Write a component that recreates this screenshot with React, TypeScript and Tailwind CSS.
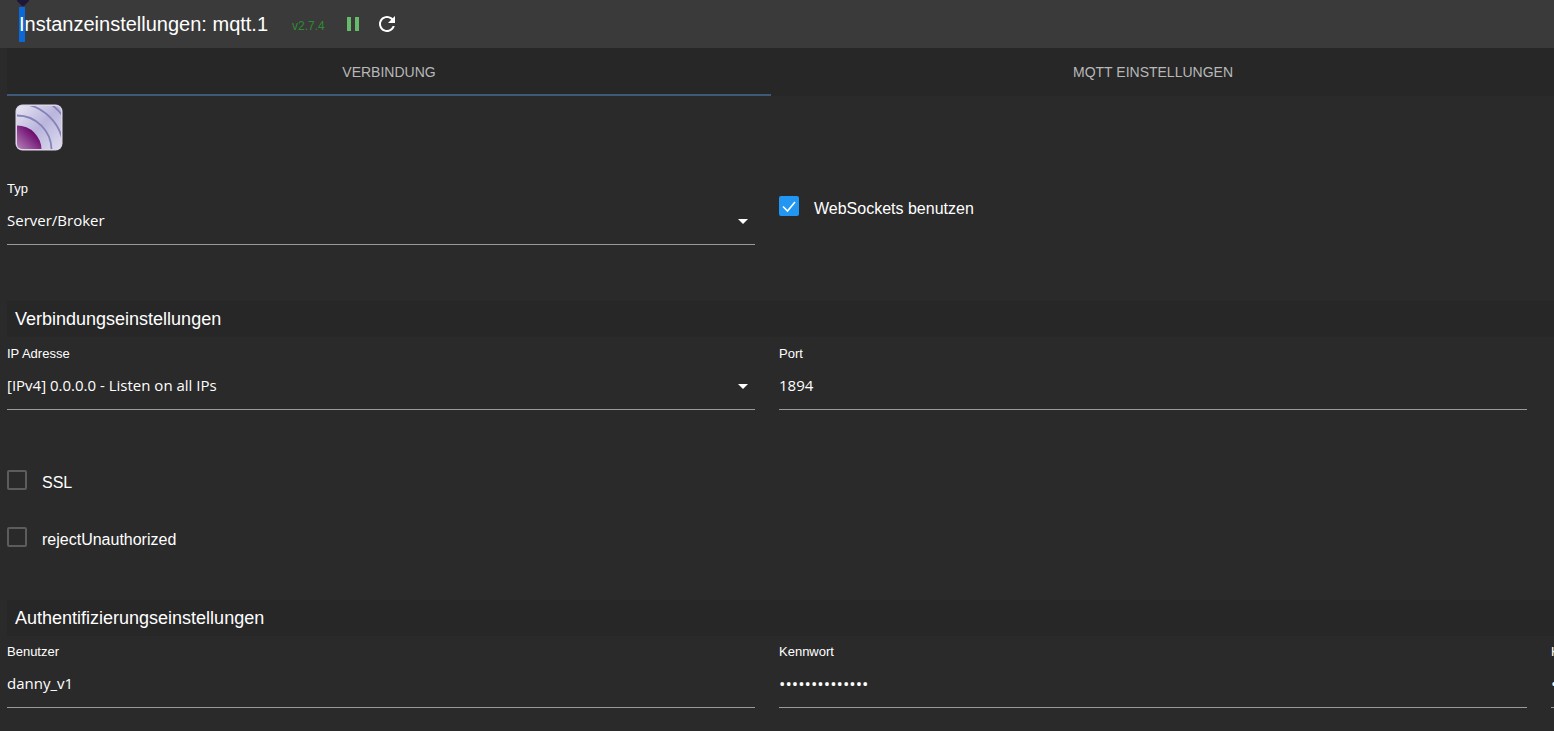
import React from 'react';

const ipOptions = ['[IPv4] 0.0.0.0 - Listen on all IPs', '[IPv4] 127.0.0.1 - Localhost'];
const typeOptions = ['Server/Broker', 'Client/Subscriber'];

const controlClass =
  "block h-[49px] w-full appearance-none rounded-none border-b border-[#9a9a9a] bg-transparent p-0 font-['Open_Sans','Noto_Sans',sans-serif] text-white outline-none";

interface FieldProps {
  id: string;
  label: string;
  children: React.ReactNode;
}

export default function App() {
  return (
    <div className="min-h-screen overflow-hidden bg-[#2a2a2a] font-['Liberation_Sans',Arial,sans-serif] text-white">
      <Header />
      <main className="pl-[7px]">
        <Tabs />
        <div className="px-2 pt-2">
          <AdapterLogo />
        </div>

        <Row className="pt-7">
          <Field id="type" label="Typ">
            <Select id="type" options={typeOptions} />
          </Field>
          <div className="pt-4">
            <Checkbox id="websockets" label="WebSockets benutzen" defaultChecked />
          </div>
        </Row>

        <SectionTitle className="mt-14">Verbindungseinstellungen</SectionTitle>
        <Row className="pt-2">
          <Field id="bind" label="IP Adresse">
            <Select id="bind" options={ipOptions} />
          </Field>
          <Field id="port" label="Port">
            <input id="port" type="text" defaultValue="1894" className={`${controlClass} text-[15px]`} />
          </Field>
        </Row>

        <div className="flex flex-col gap-[37px] pt-[60px]">
          <Checkbox id="ssl" label="SSL" />
          <Checkbox id="rejectUnauthorized" label="rejectUnauthorized" />
        </div>

        <SectionTitle className="mt-[53px]">Authentifizierungseinstellungen</SectionTitle>
        <Row className="pt-[7px]">
          <Field id="user" label="Benutzer">
            <input id="user" type="text" defaultValue="danny_v1" className={`${controlClass} text-[15px]`} />
          </Field>
          <Field id="pass" label="Kennwort">
            <input id="pass" type="password" defaultValue="12345678901234" className={`${controlClass} text-[17px]`} />
          </Field>
          <Field id="passRepeat" label="Kennwort-Wiederholung">
            <input id="passRepeat" type="password" defaultValue="12345678901234" className={`${controlClass} text-[17px]`} />
          </Field>
        </Row>
      </main>
    </div>
  );
}

function Header() {
  return (
    <header className="relative flex h-12 items-center bg-[#3a3a3a] pl-[19px]">
      <svg className="absolute left-[17px] top-0" width="12" height="6" viewBox="0 0 12 6" aria-hidden="true">
        <path d="M0 0h12v1L7 6H5L0 1z" fill="#1f1738" />
      </svg>
      <h1 className="text-xl leading-[35px]">
        <span className="inline-block bg-[#0b68d8]">I</span>nstanzeinstellungen: mqtt.1
      </h1>
      <span className="ml-6 mt-1 text-xs text-[#2e8b32]">v2.7.4</span>
      <button type="button" aria-label="Pause" className="ml-4 text-[#66bb6a]">
        <svg width="24" height="24" viewBox="0 0 24 24" fill="currentColor">
          <path d="M6 19h4V5H6v14zm8-14v14h4V5h-4z" />
        </svg>
      </button>
      <button type="button" aria-label="Neu laden" className="ml-[10px]">
        <svg width="24" height="24" viewBox="0 0 24 24" fill="currentColor">
          <path d="M17.65 6.35C16.2 4.9 14.21 4 12 4c-4.42 0-7.99 3.58-7.99 8s3.57 8 7.99 8c3.73 0 6.84-2.55 7.73-6h-2.08c-.82 2.33-3.04 4-5.65 4-3.31 0-6-2.69-6-6s2.69-6 6-6c1.66 0 3.14.69 4.22 1.78L13 11h7V4l-2.35 2.35z" />
        </svg>
      </button>
    </header>
  );
}

function Tabs() {
  return (
    <nav role="tablist" className="flex h-12 bg-[#272727] pr-[19px] text-sm text-[#b8b8b8]">
      <button type="button" role="tab" aria-selected="true" className="flex-1 border-b-2 border-[#3d5a7a] pt-[2px]">
        VERBINDUNG
      </button>
      <button type="button" role="tab" aria-selected="false" className="flex-1 border-b-2 border-transparent pt-[2px]">
        MQTT EINSTELLUNGEN
      </button>
    </nav>
  );
}

function Row({ className, children }: { className: string; children: React.ReactNode }) {
  return (
    <div className={`flex pr-[3px] *:w-1/2 *:shrink-0 *:pr-6 ${className}`}>
      {children}
    </div>
  );
}

function SectionTitle({ className, children }: { className: string; children: React.ReactNode }) {
  return <h2 className={`h-9 bg-[#272727] pl-2 text-lg leading-9 ${className}`}>{children}</h2>;
}

function Field({ id, label, children }: FieldProps) {
  return (
    <div>
      <label htmlFor={id} className="block h-4 text-[13px] leading-[18px]">{label}</label>
      {children}
    </div>
  );
}

function Select({ id, options }: { id: string; options: string[] }) {
  return (
    <div className="relative">
      <select id={id} className={`${controlClass} text-[15px]`}>
        {options.map((option) => (
          <option key={option}>{option}</option>
        ))}
      </select>
      <svg className="pointer-events-none absolute right-0 top-[13px]" width="24" height="24" viewBox="0 0 24 24" fill="currentColor">
        <path d="M7 10l5 5 5-5z" />
      </svg>
    </div>
  );
}

function Checkbox({ id, label, defaultChecked }: { id: string; label: string; defaultChecked?: boolean }) {
  return (
    <div className="flex h-5 gap-[15px]">
      <span className="relative h-5 w-5">
        <input
          id={id}
          type="checkbox"
          defaultChecked={defaultChecked}
          className="peer block h-5 w-5 appearance-none rounded-xs border-2 border-[#5c5c5c] checked:border-[#2196f3] checked:bg-[#2196f3]"
        />
        <svg className="pointer-events-none absolute inset-0 hidden peer-checked:block" width="20" height="20" viewBox="0 0 20 20" fill="none" stroke="white" strokeWidth="1.6">
          <path d="M4 10.5l4.5 4.5L16 6" />
        </svg>
      </span>
      <label htmlFor={id} className="pt-[3px] text-base leading-5">{label}</label>
    </div>
  );
}

function AdapterLogo() {
  return (
    <svg width="48" height="48" viewBox="0 0 48 48" role="img" aria-label="MQTT">
      <defs>
        <linearGradient id="tile" x1="0" y1="0" x2="1" y2="1">
          <stop offset="0" stopColor="#eceaf5" />
          <stop offset="0.5" stopColor="#b9b5dc" />
          <stop offset="1" stopColor="#e2e0f0" />
        </linearGradient>
        <linearGradient id="core" x1="0" y1="1" x2="0.7" y2="0.3">
          <stop offset="0" stopColor="#b886bb" />
          <stop offset="1" stopColor="#6c0a6e" />
        </linearGradient>
        <clipPath id="inner">
          <rect x="2" y="2" width="44" height="43" rx="5" />
        </clipPath>
      </defs>
      <rect x="0.5" y="0.5" width="47" height="46" rx="7" fill="#ded6e8" />
      <g clipPath="url(#inner)">
        <rect width="48" height="48" fill="url(#tile)" />
        <g fill="none" stroke="#8582b8" strokeWidth="1.8">
          <circle cx="2" cy="46" r="34.5" />
          <circle cx="2" cy="46" r="46.5" />
          <circle cx="2" cy="46" r="57" />
        </g>
        <path d="M2 21.5A24.5 24.5 0 0 1 26.5 46H2z" fill="url(#core)" />
      </g>
    </svg>
  );
}
